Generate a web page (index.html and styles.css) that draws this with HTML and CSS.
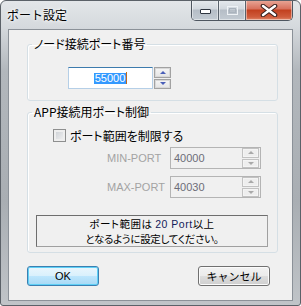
FILE: index.html
```html
<!DOCTYPE html>
<html>
    <head>
        <meta charset="utf-8">
        <link rel="stylesheet" href="styles.css">
    </head>
    <body>
        <div class="window">
            <div class="titlebar">
                <span class="title">ポート設定</span>
                <div class="caption">
                    <span class="cap min">
                        <svg width="13" height="7" viewBox="0 0 13 7"><rect x="1.5" y="1.5" width="10" height="4" rx="0.5" fill="#fff" stroke="#2f3640"/></svg>
                    </span>
                    <span class="cap max">
                        <svg width="13" height="11" viewBox="0 0 13 11"><rect x="1.5" y="1.5" width="10" height="8" fill="none" stroke="#eef2f6" stroke-width="1"/><rect x="3.5" y="3.5" width="6" height="4" fill="none" stroke="#aab3bd"/></svg>
                    </span>
                    <span class="cap close">
                        <svg width="18" height="13" viewBox="0 0 18 13"><path d="M3 2 L15 11 M15 2 L3 11" stroke="#3b2320" stroke-width="4.6" stroke-linecap="round"/><path d="M3 2 L15 11 M15 2 L3 11" stroke="#fff" stroke-width="2.4" stroke-linecap="round"/></svg>
                    </span>
                </div>
            </div>
            <div class="client">
                <fieldset class="group g1">
                    <legend>ノード接続ポート番号</legend>
                    <div class="spin active">
                        <div class="edit"><span class="sel">55000</span><span class="caret"></span></div>
                        <div class="arrows">
                            <span class="arr"><i class="up"></i></span>
                            <span class="arr"><i class="down"></i></span>
                        </div>
                    </div>
                </fieldset>

                <fieldset class="group g2">
                    <legend>APP接続用ポート制御</legend>
                    <div class="check"><span class="box"></span>ポート範囲を制限する</div>

                    <div class="row first">
                        <span class="lbl">MIN-PORT</span>
                        <div class="spin off">
                            <span class="val">40000</span>
                            <div class="arrows">
                                <span class="arr"><i class="up"></i></span>
                                <span class="arr"><i class="down"></i></span>
                            </div>
                        </div>
                    </div>
                    <div class="row">
                        <span class="lbl">MAX-PORT</span>
                        <div class="spin off">
                            <span class="val">40030</span>
                            <div class="arrows">
                                <span class="arr"><i class="up"></i></span>
                                <span class="arr"><i class="down"></i></span>
                            </div>
                        </div>
                    </div>

                    <div class="note">
                        <span class="line wide">ポート範囲は <span class="lat">20 Port</span>以上</span>
                        <span class="line small">となるように設定してください。</span>
                    </div>
                </fieldset>

                <div class="buttons">
                    <button type="button" class="btn ok">OK</button>
                    <button type="button" class="btn">キャンセル</button>
                </div>
            </div>
        </div>
    </body>
</html>
```

FILE: styles.css
```css
body{
    margin: 0;
}

.window{
    width: 301px;
    height: 306px;
    box-sizing: border-box;
    border: 1px solid #5b6168;
    border-radius: 6px 6px 3px 3px;
    background: linear-gradient(to bottom, #e3e6e9 0, #d5d9dd 26px, #b2b7bc 70px, #a9aeb3 200px, #c0c4c8 100%);
    font-family: "Liberation Sans", "Noto Sans CJK JP", sans-serif;
    font-size: 12px;
    color: #000;
    display: flex;
    flex-direction: column;
    overflow: hidden;
}

.titlebar{
    height: 28px;
    display: flex;
    align-items: flex-start;
    padding-left: 6px;
}

.title{
    margin-top: 6px;
    font-family: "Noto Sans CJK JP", sans-serif;
    font-size: 12px;
    line-height: 16px;
    text-shadow: 0 0 5px #fff, 0 0 3px #fff;
}

.caption{
    margin-left: auto;
    margin-right: 7px;
    margin-top: -1px;
    height: 20px;
    display: flex;
    border: 1px solid #4e5660;
    border-top: none;
    border-radius: 0 0 5px 5px;
    overflow: hidden;
}

.cap{
    display: flex;
    align-items: center;
    justify-content: center;
    height: 20px;
    box-shadow: inset 0 0 0 1px rgba(255,255,255,0.45);
}

.min, .max{
    width: 26px;
    border-right: 1px solid #59626c;
    background: linear-gradient(to bottom, #e6eaee 0, #d2d8de 45%, #b5bdc6 50%, #c3cbd3 100%);
}

.min svg{
    margin-top: 3px;
}

.close{
    width: 46px;
    background: linear-gradient(to bottom, #e9a99a 0, #d7705c 45%, #c2401f 50%, #cf5c3c 85%, #e0876a 100%);
}

.client{
    margin: 0 7px;
    height: 272px;
    box-sizing: border-box;
    border: 1px solid #8b9198;
    background: #f0f0f0;
    padding-left: 18px;
}

.group{
    width: 251px;
    box-sizing: border-box;
    margin: 0;
    padding: 0;
    border: 1px solid #d5dfe5;
    border-radius: 3px;
    box-shadow: inset 1px 1px 0 #fff;
}

.group legend{
    margin-left: 4px;
    padding: 0 2px;
    line-height: 14px;
    font-size: 12px;
    font-family: "Noto Sans CJK JP", sans-serif;
    font-feature-settings: "palt";
}

.g1{
    margin-top: 7px;
    padding: 16px 0 11px 0;
}

.g2{
    margin-top: 4px;
    padding: 10px 0 5px 0;
}

.spin{
    display: flex;
    height: 22px;
    font-size: 11px;
}

.active{
    margin-left: 40px;
}

.active .edit{
    width: 85px;
    box-sizing: border-box;
    border: 1px solid #b5cfe7;
    border-top-color: #3d7bad;
    background: #fff;
    display: flex;
    align-items: center;
    justify-content: center;
}

.sel{
    background: #3399ff;
    color: #fff;
    line-height: 11px;
    padding: 0 1px;
}

.caret{
    width: 1px;
    height: 12px;
    background: #c06a1c;
}

.arrows{
    width: 17px;
    display: flex;
    flex-direction: column;
    gap: 1px;
}

.active .arrows{
    margin-left: 1px;
}

.arr{
    flex: 1;
    box-sizing: border-box;
    border: 1px solid #a2a2a2;
    box-shadow: inset 0 0 0 1px #d8d8d8;
    background: linear-gradient(to bottom, #f6f6f6, #e4e4e4);
    display: flex;
    align-items: center;
    justify-content: center;
}

.arr i{
    width: 0;
    height: 0;
    border-left: 3px solid transparent;
    border-right: 3px solid transparent;
}

.arr .up{
    border-bottom: 3px solid #4a5fb8;
}

.arr .down{
    border-top: 3px solid #4a5fb8;
}

.check{
    display: flex;
    align-items: center;
    height: 13px;
    margin-left: 25px;
    font-family: "Noto Sans CJK JP", sans-serif;
    font-feature-settings: "palt";
}

.box{
    width: 13px;
    height: 13px;
    box-sizing: border-box;
    margin-right: 4px;
    border: 1px solid #8e8f8f;
    background: linear-gradient(135deg, #c9cdd2, #f4f4f4);
    box-shadow: inset 0 0 0 2px #eeeeee;
}

.row{
    display: flex;
    align-items: center;
    margin-top: 7px;
    padding-left: 79px;
}

.row.first{
    margin-top: 5px;
}

.lbl{
    width: 63px;
    font-size: 11px;
    color: #a3a3a3;
}

.off{
    width: 91px;
    box-sizing: border-box;
    border: 1px solid #b4b4b4;
    background: #f0f0f0;
    align-items: center;
    padding-right: 1px;
}

.off .val{
    padding-left: 3px;
    color: #6d6d78;
}

.off .arrows{
    margin-left: auto;
    height: 20px;
}

.off .arr{
    border-color: #c2c2c2;
    box-shadow: inset 0 0 0 1px #f4f4f4;
    background: #eeeeee;
}

.off .arr .up{
    border-bottom-color: #a9a9a9;
}

.off .arr .down{
    border-top-color: #a9a9a9;
}

.note{
    margin: 17px 0 0 8px;
    width: 232px;
    height: 32px;
    box-sizing: border-box;
    border: 1px solid #a0a0a0;
    border-top-color: #6e6e6e;
    border-left-color: #6e6e6e;
    text-align: center;
    font-family: "Noto Sans CJK JP", sans-serif;
    font-feature-settings: "palt";
}

.line{
    display: block;
    height: 15px;
    line-height: 15px;
    font-size: 10.5px;
}

.wide{
    letter-spacing: 0.5px;
}

.small{
    letter-spacing: -0.3px;
}

.lat{
    font-family: "Liberation Sans", sans-serif;
    font-size: 10.5px;
    color: #14205a;
}

.buttons{
    display: flex;
    justify-content: space-between;
    width: 243px;
    margin-top: 13px;
}

.btn{
    width: 72px;
    height: 20px;
    padding: 0;
    border: 1px solid #707070;
    border-radius: 3px;
    background: linear-gradient(to bottom, #f2f2f2 0, #ebebeb 50%, #dddddd 50%, #cfcfcf 100%);
    box-shadow: inset 0 0 0 1px #fbfbfb;
    font-family: "Liberation Sans", "Noto Sans CJK JP", sans-serif;
    font-size: 11px;
    color: #000;
}

.ok{
    border-color: #3c7fb1;
    background: linear-gradient(to bottom, #eaf6fd 0, #d9f0fc 50%, #bee6fd 50%, #a7d9f5 100%);
    box-shadow: inset 0 0 0 1px #5fd0f6;
}
```
